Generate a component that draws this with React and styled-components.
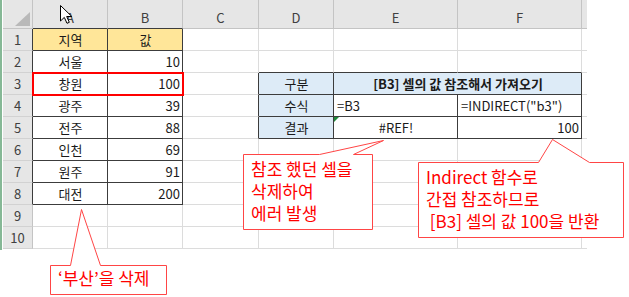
import React from 'react'
import styled, { createGlobalStyle } from 'styled-components'

const colors = {
	grid: '#dcdcdc',
	head: '#e6e6e6',
	headLine: '#c4c4c4',
	dark: '#3c3c3c',
	yellow: '#ffe699',
	blue: '#ddebf7',
	red: '#ff0000',
	callLine: '#ff4545',
}

const GlobalStyle = createGlobalStyle`
	body {
		margin: 0;
		background: #fff;
		font-family: 'Noto Sans CJK KR', 'Noto Sans', sans-serif;
	}
`

const records = [
	['서울', 10],
	['창원', 100],
	['광주', 39],
	['전주', 88],
	['인천', 69],
	['원주', 91],
	['대전', 200],
]

const App = () => {
	const rows = Array.from({ length: 10 }, (_, i) => i + 1)

	const renderRow = (r) => {
		const inList = r <= 8
		const inTable = r >= 3 && r <= 5
		const rec = records[r - 2]

		return (
			<React.Fragment key={r}>
				<RowHead $dr={inList}>{r}</RowHead>

				{r === 1 ? (
					<>
						<Cell $fill={colors.yellow} $dr $db>지역</Cell>
						<Cell $fill={colors.yellow} $dr $db>값</Cell>
					</>
				) : (
					<>
						<Cell $dr={inList} $db={inList} $sel={r === 3}>{rec && rec[0]}</Cell>
						<Cell $align='right' $dr={inList} $db={inList}>{rec && rec[1]}</Cell>
					</>
				)}

				<Cell $dr={inTable} />

				{r === 3 && (
					<>
						<Cell $fill={colors.blue} $dr $db>구분</Cell>
						<Cell $fill={colors.blue} $dr $db $bold $span={2}>
							[B3] 셀의 값 참조해서 가져오기
						</Cell>
					</>
				)}
				{r === 4 && (
					<>
						<Cell $fill={colors.blue} $dr $db>수식</Cell>
						<Cell $align='left' $dr $db>=B3</Cell>
						<Cell $align='left' $dr $db>=INDIRECT("b3")</Cell>
					</>
				)}
				{r === 5 && (
					<>
						<Cell $fill={colors.blue} $dr $db>결과</Cell>
						<Cell $dr $db $flag>#REF!</Cell>
						<Cell $align='right' $dr $db>100</Cell>
					</>
				)}
				{!inTable && (
					<>
						<Cell $db={r === 2} />
						<Cell $db={r === 2} />
						<Cell $db={r === 2} />
					</>
				)}

				<Tail />
			</React.Fragment>
		)
	}

	return (
		<Page>
			<GlobalStyle />
			<Sheet>
				<GreenEdge />
				<Grid>
					<Corner />
					{['A', 'B', 'C', 'D', 'E', 'F'].map((c) => (
						<ColHead key={c} $db={c === 'A' || c === 'B'}>{c}</ColHead>
					))}
					<ColHead $end />
					{rows.map(renderRow)}
				</Grid>
			</Sheet>

			<Callout $x={50} $y={265} $w={117} $h={30}>
				<svg width='117' height='30'>
					<path d='M0.5 0.5 H20.5 L31.5 -55.5 L50.5 0.5 H116.5 V29.5 H0.5 Z' />
				</svg>
				<CalloutText $pt={2}>‘부산’을 삭제</CalloutText>
			</Callout>

			<Callout $x={243} $y={154} $w={130} $h={76}>
				<svg width='130' height='76'>
					<path d='M0.5 0.5 H76.5 L140.5 -13.5 L110.5 0.5 H129.5 V75.5 H0.5 Z' />
				</svg>
				<CalloutText>
					참조 했던 셀을{'\n'}삭제하여{'\n'}에러 발생
				</CalloutText>
			</Callout>

			<Callout $x={418} $y={162} $w={206} $h={76}>
				<svg width='206' height='76'>
					<path d='M0.5 0.5 H120.5 L134.5 -22.5 L171.5 0.5 H205.5 V75.5 H0.5 Z' />
				</svg>
				<CalloutText>
					Indirect 함수로{'\n'}간접 참조하므로{'\n'} [B3] 셀의 값 100을 반환
				</CalloutText>
			</Callout>

			<Cursor width='13' height='19' viewBox='0 0 13 19'>
				<path d='M0.5 0.5 V16 L4.3 12.4 L7 18.3 L9.3 17.3 L6.7 11.5 H11.8 Z' />
			</Cursor>
		</Page>
	)
}

const Page = styled.div`
	position: relative;
	width: 629px;
	height: 297px;
	overflow: hidden;
	background: #fff;
`

const Sheet = styled.div`
	display: flex;
	align-items: flex-start;
`

const GreenEdge = styled.div`
	width: 2px;
	height: 250px;
	margin-right: 1px;
	background: #86b896;
`

const Grid = styled.div`
	position: relative;
	display: grid;
	grid-template-columns: 30px 75px 75px 76px 75px 124px 124px 5px;
	grid-template-rows: 29px repeat(10, 22px);
	font-size: 13px;
`

const Corner = styled.div`
	position: relative;
	box-sizing: border-box;
	background: ${colors.head};
	border-right: 1px solid ${colors.headLine};
	border-bottom: 1px solid ${colors.headLine};

	&::after {
		content: '';
		position: absolute;
		right: 2px;
		bottom: 2px;
		border-left: 15px solid transparent;
		border-bottom: 14px solid #b9b9b9;
	}
`

const ColHead = styled.div`
	box-sizing: border-box;
	display: flex;
	align-items: flex-end;
	justify-content: center;
	padding-bottom: 2px;
	line-height: 17px;
	color: #404040;
	background: ${colors.head};
	border-right: ${(p) => (p.$end ? 'none' : `1px solid ${colors.headLine}`)};
	border-bottom: 1px solid ${(p) => (p.$db ? colors.dark : colors.headLine)};
`

const RowHead = styled.div`
	box-sizing: border-box;
	display: flex;
	align-items: center;
	justify-content: center;
	color: #404040;
	background: ${colors.head};
	border-right: 1px solid ${(p) => (p.$dr ? colors.dark : colors.headLine)};
	border-bottom: 1px solid #d2d2d2;
`

const Cell = styled.div`
	position: relative;
	box-sizing: border-box;
	display: flex;
	align-items: center;
	justify-content: ${(p) =>
		p.$align === 'right' ? 'flex-end' : p.$align === 'left' ? 'flex-start' : 'center'};
	grid-column: span ${(p) => p.$span || 1};
	padding: 0 2px 0 3px;
	white-space: nowrap;
	color: #1a1a1a;
	font-weight: ${(p) => (p.$bold ? 700 : 400)};
	background: ${(p) => p.$fill || '#fff'};
	border-right: 1px solid ${(p) => (p.$dr ? colors.dark : colors.grid)};
	border-bottom: 1px solid ${(p) => (p.$db ? colors.dark : colors.grid)};

	&::before {
		content: '';
		display: ${(p) => (p.$flag ? 'block' : 'none')};
		position: absolute;
		top: 0;
		left: 0;
		border-top: 5px solid #1f8a3b;
		border-right: 5px solid transparent;
	}

	&::after {
		content: '';
		display: ${(p) => (p.$sel ? 'block' : 'none')};
		position: absolute;
		top: -1px;
		left: -1px;
		width: 152px;
		height: 24px;
		box-sizing: border-box;
		border: 2px solid ${colors.red};
		z-index: 2;
		pointer-events: none;
	}
`

const Tail = styled.div`
	border-bottom: 1px solid ${colors.grid};
`

const Callout = styled.div`
	position: absolute;
	left: ${(p) => p.$x}px;
	top: ${(p) => p.$y}px;
	width: ${(p) => p.$w}px;
	height: ${(p) => p.$h}px;

	svg {
		position: absolute;
		left: 0;
		top: 0;
		overflow: visible;
	}

	path {
		fill: #fff;
		stroke: ${colors.callLine};
		stroke-width: 1;
	}
`

const CalloutText = styled.div`
	position: relative;
	box-sizing: border-box;
	padding: ${(p) => p.$pt ?? 4}px 6px 0 8px;
	font-size: 17px;
	line-height: 22px;
	color: ${colors.red};
	white-space: pre;
`

const Cursor = styled.svg`
	position: absolute;
	left: 60px;
	top: 5px;

	path {
		fill: #fff;
		stroke: #000;
		stroke-width: 1;
		stroke-linejoin: round;
	}
`

export default App
